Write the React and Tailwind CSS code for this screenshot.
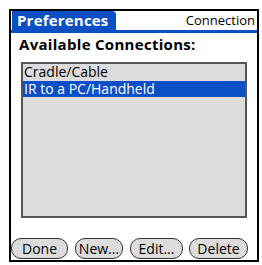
import React from 'react';

const font = { fontFamily: '"Open Sans", "DejaVu Sans", sans-serif' };

const PalmButton = ({ label, width }) => (
  <button
    className={`h-[21px] rounded-[10px] border-[1.5px] border-[#333] bg-[#dcdcdc] text-[14px] leading-none text-black ${width}`}
  >
    {label}
  </button>
);

const App = () => {
  const connections = ['Cradle/Cable', 'IR to a PC/Handheld'];
  const selected = 1;

  return (
    <div className="w-[262px] h-[265px] bg-white pt-[9px] pl-[9px] pr-[3px] pb-[3px]" style={font}>
      <div className="h-full border-2 border-black flex flex-col">
        {/* title bar */}
        <div className="flex items-end justify-between border-b-[3px] border-[#0b4fc6] h-[22px] pr-[2px]">
          <div className="bg-[#0b4fc6] text-white font-bold text-[15px] leading-none h-[19px] ml-[1px] pl-[5px] pr-[7px] rounded-tr-[4px] flex items-center tracking-[0.2px]">
            Preferences
          </div>
          <div className="text-[13px] leading-none pb-[3px]">Connection</div>
        </div>

        <div className="font-bold text-[15px] leading-none px-[8px] pt-[4px] tracking-[0.3px]">
          Available Connections:
        </div>

        {/* list */}
        <div className="ml-[10px] w-[226px] mt-[10px] h-[156px] border-2 border-[#555] bg-[#dcdcdc]">
          {connections.map((c, i) => (
            <div
              key={c}
              className={`h-[16.5px] px-[1px] text-[14px] leading-[16.5px] ${i === selected ? 'bg-[#0b4fc6] text-white' : 'text-black'}`}
            >
              {c}
            </div>
          ))}
        </div>

        {/* buttons */}
        <div className="flex gap-[7px] mt-[20px]">
          <PalmButton label="Done" width="w-[57px]" />
          <PalmButton label="New..." width="w-[48px]" />
          <PalmButton label="Edit..." width="w-[53px]" />
          <PalmButton label="Delete" width="w-[59px] ml-[-1px]" />
        </div>
      </div>
    </div>
  );
};

export default App;
